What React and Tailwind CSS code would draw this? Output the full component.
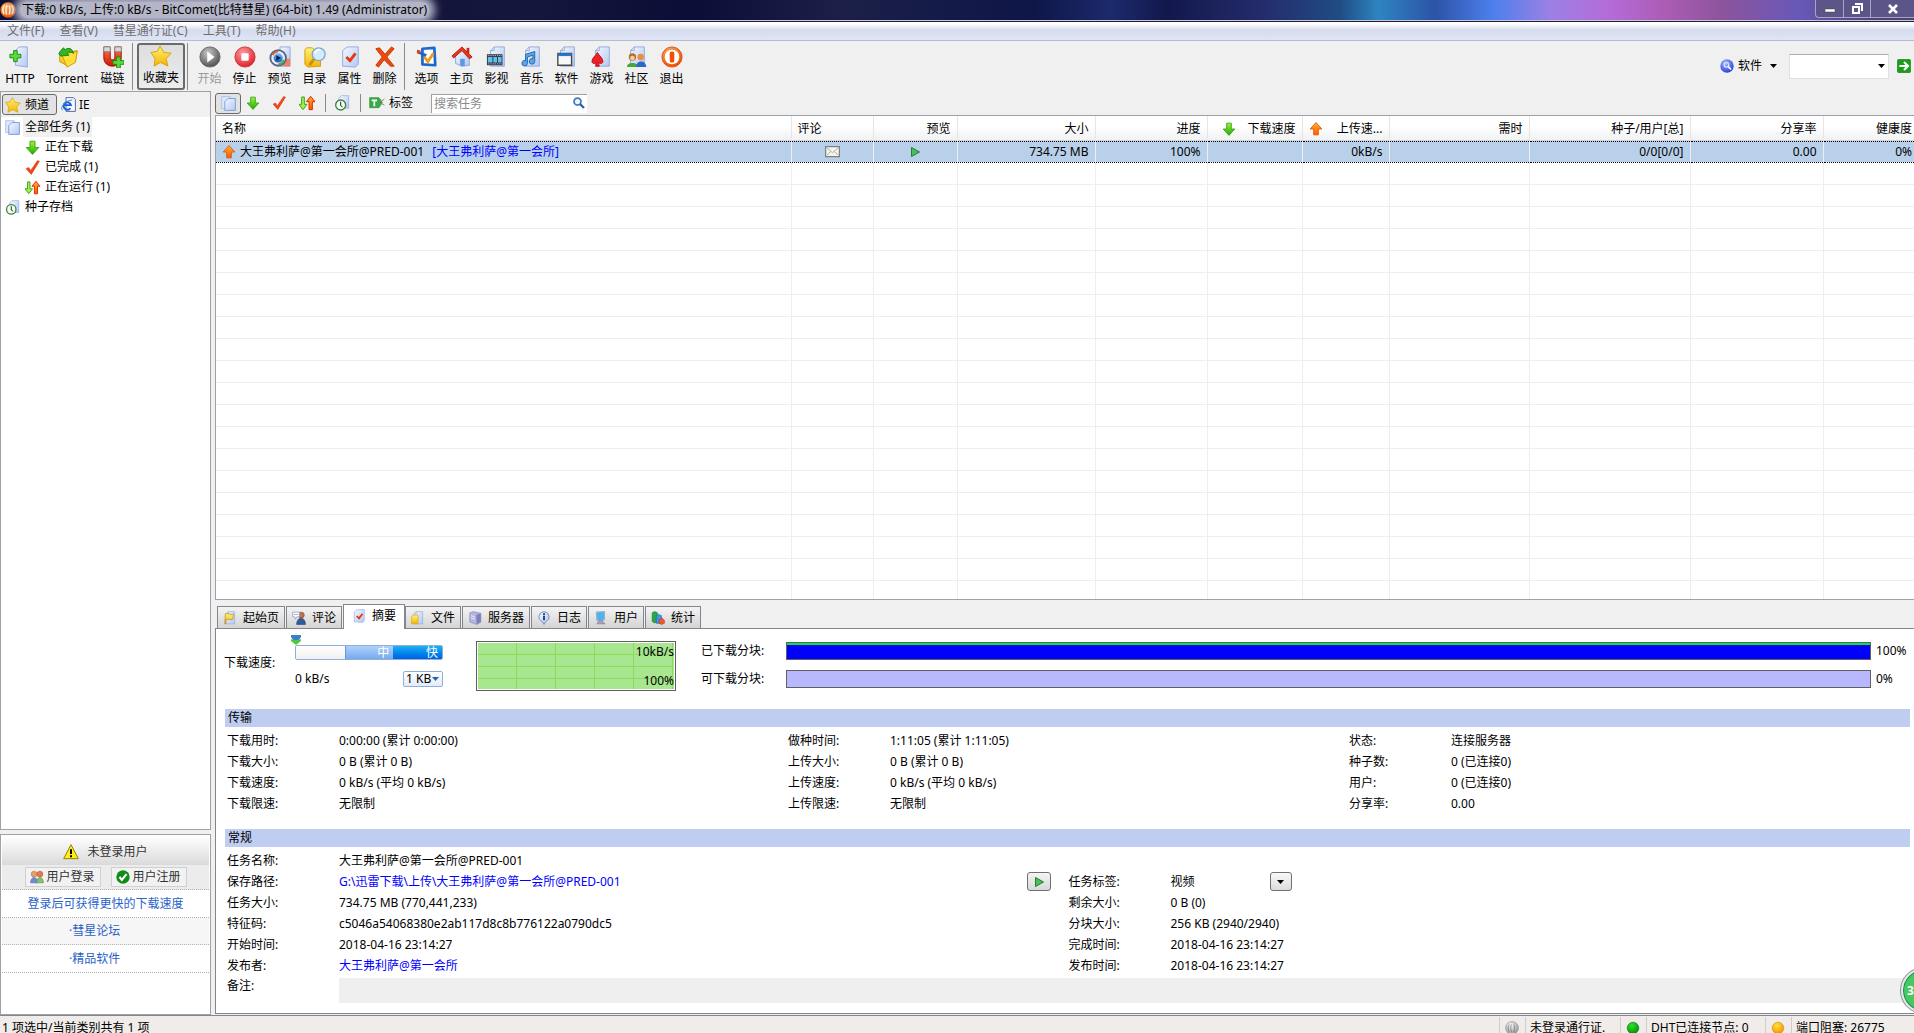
import React, { useState } from 'react';

/* shared gradients for all the small icons */
function IconDefs() {
  return (
    <svg width="0" height="0" className="absolute" aria-hidden="true">
      <defs>
        <linearGradient id="page" x1="0" y1="0" x2="1" y2="1">
          <stop offset="0" stopColor="#f4f8ff" />
          <stop offset="1" stopColor="#b4c8f4" />
        </linearGradient>
        <linearGradient id="gold" x1="0" y1="0" x2="0" y2="1">
          <stop offset="0" stopColor="#fff27a" />
          <stop offset="1" stopColor="#f4b400" />
        </linearGradient>
        <linearGradient id="red" x1="0" y1="0" x2="0" y2="1">
          <stop offset="0" stopColor="#ff7a52" />
          <stop offset="1" stopColor="#cc1800" />
        </linearGradient>
        <linearGradient id="orange" x1="0" y1="0" x2="0" y2="1">
          <stop offset="0" stopColor="#ffb030" />
          <stop offset="1" stopColor="#ff5a00" />
        </linearGradient>
        <linearGradient id="green" x1="0" y1="0" x2="0" y2="1">
          <stop offset="0" stopColor="#a8f030" />
          <stop offset="1" stopColor="#1fa80c" />
        </linearGradient>
        <linearGradient id="blue" x1="0" y1="0" x2="0" y2="1">
          <stop offset="0" stopColor="#6fc0f4" />
          <stop offset="1" stopColor="#1c58b8" />
        </linearGradient>
        <radialGradient id="grayBall" cx="0.4" cy="0.3" r="0.75">
          <stop offset="0" stopColor="#c8c8c8" />
          <stop offset="1" stopColor="#4a4a4a" />
        </radialGradient>
        <radialGradient id="redBall" cx="0.4" cy="0.3" r="0.75">
          <stop offset="0" stopColor="#ff9c9c" />
          <stop offset="1" stopColor="#dc1c28" />
        </radialGradient>
        <radialGradient id="orangeBall" cx="0.4" cy="0.3" r="0.75">
          <stop offset="0" stopColor="#ffb060" />
          <stop offset="1" stopColor="#e84800" />
        </radialGradient>
        <radialGradient id="blueBall" cx="0.4" cy="0.3" r="0.75">
          <stop offset="0" stopColor="#a8bcff" />
          <stop offset="1" stopColor="#1c38d8" />
        </radialGradient>
        <radialGradient id="greenBall" cx="0.4" cy="0.3" r="0.75">
          <stop offset="0" stopColor="#30e030" />
          <stop offset="1" stopColor="#008c00" />
        </radialGradient>
        <radialGradient id="yellowBall" cx="0.4" cy="0.3" r="0.75">
          <stop offset="0" stopColor="#ffe040" />
          <stop offset="1" stopColor="#f49000" />
        </radialGradient>
        <radialGradient id="silverBall" cx="0.4" cy="0.3" r="0.75">
          <stop offset="0" stopColor="#ffffff" />
          <stop offset="1" stopColor="#8c8c8c" />
        </radialGradient>
      </defs>
    </svg>
  );
}

const Page = () => (
  <path d="M9 1h11v21H5V5z M9 1v4H5" fill="url(#page)" stroke="#8ca8dc" strokeWidth="1" />
);

const Plus = ({ x, y }) => (
  <path
    transform={`translate(${x} ${y})`}
    d="M4 0h4v4h4v4H8v4H4V8H0V4h4z"
    fill="#5cd840"
    stroke="#189010"
  />
);

const icons = {
  http: <><path d="M11 1h9v22l-13-2V5z" fill="url(#page)" stroke="#8ca8dc" /><Plus x={1} y={5} /></>,
  torrent: (
    <>
      <path d="M3 7l2-3h6l2 3 9-2-2 12-8 5L3 17z" fill="url(#gold)" stroke="#c89000" />
      <path d="M5 9l17-3-2 12-9 5z" fill="#ffdf3a" stroke="#d09c00" />
      <path d="M2 8l5-6 2 2c4-3 8-1 9 4-3-2-5-2-7 0l2 2-9 1z" fill="#30b828" stroke="#0c8010" />
    </>
  ),
  magnet: (
    <>
      <path d="M2 1h7v11c0 4 5 4 5 0V1h7v12c0 12-19 12-19 0z" fill="url(#red)" stroke="#981400" />
      <path d="M2 1h7v5H2zM14 1h7v5h-7z" fill="#d8d8d8" stroke="#909090" />
      <Plus x={12} y={12} />
    </>
  ),
  star: (
    <path
      d="M11 1l4 7 8 1-5.500 6 2 8-8-4-7 4 1-8L1 8l7-1z"
      fill="url(#gold)"
      stroke="#d8a000"
      strokeLinejoin="round"
    />
  ),
  start: <><circle cx="12" cy="12" r="11" fill="url(#grayBall)" stroke="#666" /><path d="M9 6l8 6-8 6z" fill="#fff" /></>,
  stop: <><circle cx="12" cy="12" r="11" fill="url(#redBall)" stroke="#d03038" /><rect x="8" y="8" width="8" height="8" rx="1" fill="#fff" /></>,
  preview: (
    <>
      <path d="M12 1h11v21H12z" fill="url(#page)" stroke="#8ca8dc" />
      <path d="M17 14h6v8h-8z" fill="#f08060" />
      <circle cx="10" cy="13" r="8.500" fill="#e8eefc" stroke="#5a6480" strokeWidth="2" />
      <path d="M4 10a7 7 0 0 1 6-4" stroke="#e06040" strokeWidth="2" fill="none" />
      <path d="M16 15a7 7 0 0 1-6 5" stroke="#40b060" strokeWidth="2" fill="none" />
      <circle cx="10" cy="13" r="5" fill="url(#blue)" />
      <path d="M8 10l5 3-5 3z" fill="#061c50" />
    </>
  ),
  folder: (
    <>
      <path d="M1 4l2-2h6l2 2h7v18l-14 1-3-3z" fill="url(#gold)" stroke="#d09c00" />
      <path d="M11 14l-5 7" stroke="#c88c20" strokeWidth="3" />
      <circle cx="16" cy="9" r="7" fill="#d4ecfc" stroke="#80a8d0" strokeWidth="1.500" />
      <path d="M12 8c1-3 3-4 5-4" stroke="#fff" strokeWidth="2" fill="none" />
    </>
  ),
  props: <><path d="M9 1h12v19l-3 3-14-1V5z" fill="url(#page)" stroke="#8ca8dc" /><path d="M8 12l4 4 6-8" fill="none" stroke="#e43808" strokeWidth="3" /></>,
  remove: (
    <path d="M2 3l4-1 6 7 7-8 3 2-8 9 8 10h-4l-7-7-6 8-3-2 7-9z" fill="#ec4a0c" stroke="#c83400" />
  ),
  options: (
    <>
      <path d="M7 3l13-1 1 19-14-1z" fill="#fff" stroke="#1c68d0" strokeWidth="3" strokeLinejoin="round" />
      <path d="M9 12l4 5 6-9" fill="none" stroke="#f49810" strokeWidth="3" />
      <path d="M1 5l11 4-2 3-8-4z" fill="#2464c0" />
      <path d="M1 4l4 1-1 4-3-1z" fill="#d84020" />
    </>
  ),
  home: (
    <>
      <path d="M5 11l7-7 8 7v10l-8 1-7-3z" fill="url(#page)" stroke="#88a8d8" />
      <path d="M10 14h5v8h-5z" fill="#5c98e4" />
      <path d="M17 2h3v6h-3z" fill="#c03018" />
      <path d="M1 11L12 1l11 11-3 2-8-9-9 8z" fill="#ec3418" stroke="#b01c08" />
    </>
  ),
  film: (
    <>
      <Page />
      <path d="M1 9h17v12H1z" fill="#30343c" />
      <path d="M2 12h5v6H2zM8 12h4v6H8zM13 12h4v6h-4z" fill="#60c0f0" />
      <path d="M2 10.500h16M2 19.500h16" stroke="#e8e8e8" strokeWidth="1" strokeDasharray="1 1" />
    </>
  ),
  music: (
    <>
      <Page />
      <path d="M5 9l10-3v11a3 3 0 1 1-2-3v-4l-6 2v7a3 3 0 1 1-2-3z" fill="#58a8e8" stroke="#2060a8" />
    </>
  ),
  app: (
    <>
      <Page />
      <path d="M2 8h15v13H2z" fill="#f8f8f8" stroke="#484848" strokeWidth="1.500" />
      <path d="M2 8h15v3H2z" fill="#2878d0" />
    </>
  ),
  game: (
    <>
      <Page />
      <path d="M7 7c2 4 6 6 6 10 0 2-3 3-5 1l1 4H5l1-4c-2 2-5 1-5-1 0-4 4-6 6-10z" fill="#f02028" stroke="#c00c14" />
    </>
  ),
  people: (
    <>
      <Page />
      <circle cx="7" cy="12" r="4" fill="#b87028" />
      <circle cx="7" cy="13" r="2.500" fill="#f8d0a0" />
      <path d="M1 23c0-6 12-6 12 0z" fill="#44a838" />
      <circle cx="16" cy="12" r="3.500" fill="#e89040" />
      <path d="M11 23c0-8 11-8 11 0z" fill="#2c68c8" />
    </>
  ),
  exit: (
    <>
      <circle cx="12" cy="12" r="11" fill="url(#orangeBall)" stroke="#e05010" />
      <circle cx="12" cy="12" r="8" fill="#fff" />
      <rect x="9.500" y="6" width="5" height="12" rx="2" fill="#f05000" />
    </>
  ),
  pages: (
    <>
      <path d="M1 1h14v19H1z" fill="#dce8fc" stroke="#94b0e0" />
      <path d="M11 4h12v19H6V9z" fill="url(#page)" stroke="#7c9cd8" strokeWidth="1.500" />
    </>
  ),
  down: <path d="M8 2h8v10h6L12 23 2 12h6z" fill="url(#green)" stroke="#30a818" strokeWidth="1.500" />,
  up: <path d="M8 22h8V12h6L12 1 2 12h6z" fill="url(#orange)" stroke="#e05800" strokeWidth="1.500" />,
  check: <path d="M2 14l4-2 3 5L20 1l3 1L10 23z" fill="#f04818" stroke="#d83000" />,
  updown: (
    <>
      <path d="M4 3h4v11h4l-6 8-6-8h4z" fill="#a8ec50" stroke="#38a818" strokeWidth="1.500" />
      <path d="M15 22h5V10h4L17.500 2 11 10h4z" fill="url(#orange)" stroke="#e02800" strokeWidth="1.500" />
    </>
  ),
  clock: (
    <>
      <path d="M11 1h11v19H7V5z" fill="url(#page)" stroke="#8ca8dc" />
      <circle cx="10" cy="15" r="7.500" fill="#f4fff4" stroke="#3c8040" strokeWidth="2" />
      <path d="M10 10v6l3 2" fill="none" stroke="#202020" strokeWidth="1.500" />
    </>
  ),
  tag: (
    <>
      <path d="M1 4h14l5 7-5 8H1z" fill="#3ca848" stroke="#249034" />
      <path d="M4 8h8M8 8v9" stroke="#fff" strokeWidth="2.500" />
      <path d="M18 11c2-4 3-3 5-5M18 12c2 3 3 1 5 3" stroke="#787878" fill="none" strokeWidth="1.500" />
    </>
  ),
  ie: (
    <>
      <path d="M8 1h12l3 3v19H8z" fill="#f8faff" stroke="#4c64a0" strokeWidth="1.500" />
      <path d="M15 18a6 6 0 1 1 1-5H4" fill="none" stroke="#1c60d8" strokeWidth="3" />
      <path d="M2 21C-2 16 8 5 18 5" stroke="#2880e8" fill="none" strokeWidth="1.500" />
    </>
  ),
  search: (
    <>
      <circle cx="9" cy="9" r="7" fill="#f0f6ff" stroke="#3c78c0" strokeWidth="3.500" />
      <path d="M14 14l8 8" stroke="#2c5ca8" strokeWidth="4.500" />
    </>
  ),
  searchBall: (
    <>
      <circle cx="12" cy="12" r="11.500" fill="url(#blueBall)" />
      <circle cx="11" cy="10" r="4" fill="none" stroke="#dce8ff" strokeWidth="2" />
      <path d="M14 13l5 5" stroke="#fff" strokeWidth="3" />
    </>
  ),
  go: (
    <>
      <rect x="0.500" y="0.500" width="23" height="23" rx="3" fill="#1c9c1c" stroke="#108010" />
      <path d="M4 12h13M12 5l7 7-7 7" stroke="#fff" strokeWidth="3.500" fill="none" />
    </>
  ),
  play: <path d="M5 3l16 9-16 9z" fill="#4cbc5c" stroke="#1c8030" strokeWidth="2" />,
  mail: (
    <>
      <path d="M1 4h22v16H1z" fill="#f4f4f0" stroke="#808080" strokeWidth="2" />
      <path d="M3 6l9 8 9-8M3 18l6-6M21 18l-6-6" stroke="#a8a8a8" fill="none" strokeWidth="1.500" />
    </>
  ),
  warn: (
    <>
      <path d="M12 1l11 21H1z" fill="#ffee10" stroke="#908408" strokeWidth="1.500" strokeLinejoin="round" />
      <path d="M12 8v7M12 17v3" stroke="#000" strokeWidth="3" />
    </>
  ),
  users: (
    <>
      <circle cx="7" cy="7" r="5" fill="#e8a060" stroke="#b87030" />
      <path d="M1 22c0-12 12-12 12 0z" fill="#7088d8" stroke="#5068b0" />
      <circle cx="17" cy="7" r="5" fill="#e87850" stroke="#b05030" />
      <path d="M11 22c0-12 12-12 12 0z" fill="#80c070" stroke="#509040" />
    </>
  ),
  ok: <><circle cx="12" cy="12" r="11.500" fill="#108c18" /><path d="M6 12l4 5 8-10" stroke="#fff" strokeWidth="3.500" fill="none" /></>,
  flag: <><Page /><path d="M4 5c5-3 8 3 14 0l-1 9c-5 3-7-2-12 1v7H3z" fill="url(#gold)" stroke="#a88010" /></>,
  comment: (
    <>
      <circle cx="16" cy="7" r="5" fill="#c87048" stroke="#803820" />
      <path d="M8 23c0-14 15-14 15 0z" fill="#305c98" stroke="#203c70" />
      <path d="M1 2h12v8H8l-2 4-1-4H1z" fill="#fff" stroke="#7088b0" />
      <path d="M3 6h8" stroke="#7088b0" strokeWidth="1.500" strokeDasharray="2 1" />
    </>
  ),
  file: <><Page /><path d="M1 9l3-2h8v15H1z" fill="url(#gold)" stroke="#d8a000" /></>,
  server: (
    <>
      <path d="M3 3l6-2 13 3v15l-7 4L3 19z" fill="#b4b4e0" stroke="#8484b4" />
      <path d="M14 7l8-3v15l-7 4z" fill="#8080b8" />
      <path d="M5 8l7 2M5 12l7 2" stroke="#f0f0ff" strokeWidth="1.500" />
    </>
  ),
  log: (
    <>
      <path d="M12 1a10 9 0 0 1 3 17l-3 5-3-5A10 9 0 0 1 12 1z" fill="url(#page)" stroke="#6c84b0" strokeWidth="1.500" />
      <path d="M12 4v3M12 8v8" stroke="#103070" strokeWidth="3" />
    </>
  ),
  pc: (
    <>
      <path d="M4 2l14-1v14l-13 1z" fill="#48b4f0" stroke="#a0b0c8" strokeWidth="2" />
      <path d="M9 16h6v3l4 3H5z" fill="#9ca4c4" stroke="#707898" />
    </>
  ),
  stat: (
    <>
      <path d="M2 3l4-2 5 2v17H5l-3-2z" fill="#28a848" stroke="#108030" />
      <path d="M9 8l4-2 5 2v13H9z" fill="#3898e0" stroke="#1868b0" />
      <path d="M14 15l5-3 4 4v5l-5 2-4-2z" fill="#f05830" stroke="#c03010" />
    </>
  ),
  comet: (
    <>
      <circle cx="12" cy="12" r="11.500" fill="url(#orangeBall)" />
      <path d="M6 18C3 12 5 7 7 5M10 19C8 12 9 8 11 5M14 19c2-7 1-11 0-14M18 18c3-6 1-11-1-13" stroke="#ffe8c8" strokeWidth="2.500" fill="none" />
    </>
  ),
  passport: (
    <>
      <circle cx="12" cy="12" r="11" fill="url(#silverBall)" stroke="#8c8c8c" />
      <path d="M7 18C4 12 6 7 8 6M11 19c-2-7-1-11 0-13M15 19c2-7 1-11 0-13" stroke="#7c7c7c" strokeWidth="1.500" fill="none" />
    </>
  ),
  greenLed: <circle cx="12" cy="12" r="10" fill="url(#greenBall)" stroke="#087808" />,
  yellowLed: <circle cx="12" cy="12" r="10" fill="url(#yellowBall)" stroke="#d88800" />,
};

function Icon({ name, className = 'w-4 h-4' }) {
  return (
    <svg viewBox="0 0 24 24" className={`${className} shrink-0`} aria-hidden="true">
      {icons[name]}
    </svg>
  );
}

const Caret = ({ className = 'text-black' }) => (
  <svg viewBox="0 0 7 4" className={`w-[7px] h-1 shrink-0 ${className}`} aria-hidden="true">
    <path d="M0 0h7L3.500 4z" fill="currentColor" />
  </svg>
);

const menus = ['文件(F)', '查看(V)', '彗星通行证(C)', '工具(T)', '帮助(H)'];

const taskTools = [
  ['start', '开始'],
  ['stop', '停止'],
  ['preview', '预览'],
  ['folder', '目录'],
  ['props', '属性'],
  ['remove', '删除'],
];

const siteTools = [
  ['options', '选项'],
  ['home', '主页'],
  ['film', '影视'],
  ['music', '音乐'],
  ['app', '软件'],
  ['game', '游戏'],
  ['people', '社区'],
  ['exit', '退出'],
];

const columns = [
  { title: '名称', width: '', pad: 'pl-1.5' },
  { title: '评论', width: 'w-[82px]', pad: 'pl-1.5' },
  { title: '预览', width: 'w-[84px]', pad: 'justify-end pr-1.5' },
  { title: '大小', width: 'w-[138px]', pad: 'justify-end pr-1.5' },
  { title: '进度', width: 'w-[112px]', pad: 'justify-end pr-1.5' },
  { title: '下载速度', width: 'w-[95px]', pad: 'justify-between pl-3.5 pr-1.5', icon: 'down' },
  { title: '上传速...', width: 'w-[87px]', pad: 'justify-between pl-1.5 pr-1.5', icon: 'up' },
  { title: '需时', width: 'w-[140px]', pad: 'justify-end pr-1.5' },
  { title: '种子/用户[总]', width: 'w-[161px]', pad: 'justify-end pr-1.5' },
  { title: '分享率', width: 'w-[133px]', pad: 'justify-end pr-1.5' },
  { title: '健康度', width: 'w-[91px]', pad: 'justify-end pr-0.5' },
];

const tabs = [
  ['flag', '起始页'],
  ['comment', '评论'],
  ['props', '摘要'],
  ['file', '文件'],
  ['server', '服务器'],
  ['log', '日志'],
  ['pc', '用户'],
  ['stat', '统计'],
];

const transfer = [
  [['下载用时:', '0:00:00 (累计 0:00:00)'], ['做种时间:', '1:11:05 (累计 1:11:05)'], ['状态:', '连接服务器']],
  [['下载大小:', '0 B (累计 0 B)'], ['上传大小:', '0 B (累计 0 B)'], ['种子数:', '0 (已连接0)']],
  [['下载速度:', '0 kB/s (平均 0 kB/s)'], ['上传速度:', '0 kB/s (平均 0 kB/s)'], ['用户:', '0 (已连接0)']],
  [['下载限速:', '无限制'], ['上传限速:', '无限制'], ['分享率:', '0.00']],
];

const emptyRows = Array.from({ length: 30 }, (_, i) => i);

function ToolButton({ icon, label, width = 'w-[35px]', disabled }) {
  return (
    <button type="button" disabled={disabled} className={`${width} flex flex-col items-center pt-0.5 ${disabled ? 'text-[#9a9a9a]' : ''}`}>
      <Icon name={icon} className="w-[22px] h-[22px]" />
      <span className="mt-0.5 leading-[18px] whitespace-nowrap">{label}</span>
    </button>
  );
}

const ToolSeparator = () => <div className="w-px self-stretch ml-0.5 mr-1 bg-[#8a8a8a]" />;

function TitleBar() {
  return (
    <header className="flex items-center h-[21px] shrink-0 border-b border-[#c9c6e0] bg-[linear-gradient(90deg,#0c1034_0%,#14163c_28%,#0a0e36_36%,#1c2048_44%,#0e1648_54%,#1c2a6c_58%,#12184c_61%,#242c6c_66%,#204c84_70%,#2e84c0_72%,#2c54a8_75%,#4c80ec_78%,#9c80e4_81%,#b46cd8_84%,#ac5cb4_87%,#8c549c_90%,#6858b8_94%,#4c4470_98%)]">
      <Icon name="comet" className="w-4 h-4" />
      <h1 className="ml-1 px-0.5 leading-4 text-[12px] text-black rounded-full bg-[#b4b6c8] shadow-[0_0_8px_6px_#b4b6c8] whitespace-nowrap">
        下载:0 kB/s, 上传:0 kB/s - BitComet(比特彗星) (64-bit) 1.49 (Administrator)
      </h1>
      <div className="ml-auto self-start flex h-[18px] rounded-bl border-l border-b border-[#a8a4cc] bg-[#5c5688] text-white">
        <button type="button" aria-label="最小化" className="w-7 flex justify-center items-center border-r border-[#a8a4cc]">
          <svg viewBox="0 0 12 10" className="w-3 h-2.5"><path d="M1 5h10v3H1z" fill="#fff" stroke="#444" strokeWidth="0.500" /></svg>
        </button>
        <button type="button" aria-label="还原" className="w-[27px] flex justify-center items-center border-r border-[#a8a4cc]">
          <svg viewBox="0 0 12 12" className="w-3 h-3"><path d="M4 1h7v7M2 4h6v6H2z" fill="none" stroke="#fff" strokeWidth="2" /></svg>
        </button>
        <button type="button" aria-label="关闭" className="w-[43px] flex justify-center items-center">
          <svg viewBox="0 0 10 10" className="w-2.5 h-2.5"><path d="M1 1l8 8M9 1L1 9" stroke="#fff" strokeWidth="2.500" /></svg>
        </button>
      </div>
    </header>
  );
}

function Toolbar() {
  return (
    <div className="flex items-center h-[50px] shrink-0">
      <div className="flex items-center h-[47px]">
        <ToolButton icon="http" label="HTTP" width="w-10" />
        <ToolButton icon="torrent" label="Torrent" width="w-[55px]" />
        <ToolButton icon="magnet" label="磁链" />
        <ToolSeparator />
        <button type="button" aria-pressed="true" className="w-12 h-[47px] flex flex-col items-center rounded-[3px] border-2 border-[#6a6a6a] bg-linear-to-b from-[#dedede] to-[#ececec]">
          <Icon name="star" className="w-[22px] h-[22px]" />
          <span className="mt-0.5 leading-[18px] whitespace-nowrap">收藏夹</span>
        </button>
        <ToolSeparator />
        {taskTools.map(([icon, label]) => (
          <ToolButton key={label} icon={icon} label={label} disabled={icon === 'start'} />
        ))}
        <ToolSeparator />
        {siteTools.map(([icon, label]) => (
          <ToolButton key={label} icon={icon} label={label} />
        ))}
      </div>
      <div className="ml-auto flex items-center pr-[3px]">
        <Icon name="searchBall" className="w-3.5 h-3.5" />
        <button type="button" className="flex items-center gap-2 ml-1 mr-3">
          软件 <Caret />
        </button>
        <div className="relative flex items-center">
          <select aria-label="搜索内容" className="appearance-none w-[100px] h-[25px] bg-white border border-[#dde0e8] border-t-[#aaaab0]">
            <option></option>
          </select>
          <span className="absolute right-1 pointer-events-none"><Caret /></span>
        </div>
        <button type="button" aria-label="搜索" className="ml-2">
          <Icon name="go" className="w-3.5 h-3.5" />
        </button>
      </div>
    </div>
  );
}

function TreeItem({ icon, label, nested, selected }) {
  return (
    <li className={`flex items-center h-5 ${nested ? 'pl-6' : 'pl-1'}`}>
      <Icon name={icon} className="w-[15px] h-[15px]" />
      <span className={`ml-[3px] px-0.5 leading-5 ${selected ? 'bg-[#f0f0f0]' : ''}`}>{label}</span>
    </li>
  );
}

function Sidebar() {
  return (
    <aside className="w-[211px] shrink-0 flex flex-col gap-1">
      <div className="flex-1 min-h-0 border border-[#a0a0a8] bg-white">
        <div className="flex items-center h-[25px] bg-[#f0f0f0] pl-px">
          <button type="button" className="flex items-center h-[21px] w-[55px] pl-0.5 gap-1 rounded-[3px] border border-[#6a6a6a] bg-[#e2e2e2]">
            <Icon name="star" />
            <span>频道</span>
          </button>
          <button type="button" className="flex items-center gap-[3px] ml-1">
            <Icon name="ie" className="w-[15px] h-[15px]" /> IE
          </button>
        </div>
        <ul>
          <TreeItem icon="pages" label="全部任务 (1)" selected />
          <TreeItem icon="down" label="正在下载" nested />
          <TreeItem icon="check" label="已完成 (1)" nested />
          <TreeItem icon="updown" label="正在运行 (1)" nested />
          <TreeItem icon="clock" label="种子存档" />
        </ul>
      </div>
      <div className="border border-[#a0a0a8] bg-white p-px pb-[41px] text-[#2a62c8]">
        <div className="flex items-center justify-center gap-2 h-[29px] pt-0.5 bg-linear-to-b from-white to-[#dadada] text-[#333]">
          <Icon name="warn" /> 未登录用户
        </div>
        <div className="flex items-center justify-center gap-2.5 h-[25px] bg-[#ececec] text-[#333] border-b border-dotted border-[#b0b0b0]">
          <button type="button" className="flex items-center justify-center gap-0.5 w-[76px] h-5 border border-[#d0d0d0] bg-[#f2f2f2]">
            <Icon name="users" className="w-3.5 h-3.5" /> 用户登录
          </button>
          <button type="button" className="flex items-center justify-center gap-0.5 w-[76px] h-5 border border-[#d0d0d0] bg-[#f2f2f2]">
            <Icon name="ok" className="w-3.5 h-3.5" /> 用户注册
          </button>
        </div>
        <a href="#login" className="flex items-center justify-center h-7 border-b border-dotted border-[#b0b0b0]">登录后可获得更快的下载速度</a>
        <a href="#forum" className="flex items-center h-[27px] pl-[67px] bg-[#f6f6f6] border-b border-dotted border-[#b0b0b0]">·彗星论坛</a>
        <a href="#soft" className="flex items-center h-7 pl-[67px] border-b border-dotted border-[#b0b0b0]">·精品软件</a>
      </div>
    </aside>
  );
}

function FilterBar() {
  return (
    <div className="flex items-center h-6 shrink-0">
      <button type="button" aria-label="全部任务" className="flex items-center justify-center w-[26px] h-[21px] rounded-[3px] border border-[#6a6a6a] bg-[#e2e2e2]">
        <Icon name="pages" className="w-[15px] h-[15px]" />
      </button>
      <button type="button" aria-label="正在下载" className="w-6 flex justify-center"><Icon name="down" className="w-3.5 h-3.5" /></button>
      <button type="button" aria-label="已完成" className="w-7 flex justify-center"><Icon name="check" className="w-3.5 h-3.5" /></button>
      <button type="button" aria-label="正在运行" className="w-7 flex justify-center"><Icon name="updown" /></button>
      <div className="w-px h-[18px] mx-1 bg-[#8a8a8a]" />
      <button type="button" aria-label="种子存档" className="w-6 flex justify-center"><Icon name="clock" /></button>
      <div className="w-px h-[18px] ml-1.5 mr-2 bg-[#8a8a8a]" />
      <button type="button" className="flex items-center gap-1"><Icon name="tag" /> 标签</button>
      <div className="relative flex items-center ml-[18px]">
        <input type="text" aria-label="搜索任务" placeholder="搜索任务" className="w-[156px] h-[19px] pl-0.5 pr-5 bg-white border-t border-l border-[#a0a0a0] placeholder:text-[#8a8a8a] outline-none" />
        <button type="button" aria-label="搜索" className="absolute right-0.5"><Icon name="search" className="w-3 h-3" /></button>
      </div>
    </div>
  );
}

function TaskTable() {
  return (
    <div className="flex-1 min-h-0 overflow-hidden bg-white border border-r-0 border-[#a0a0a8]">
      <table className="w-full table-fixed border-collapse">
        <thead>
          <tr className="h-[25px] bg-linear-to-b from-white from-40% to-[#eff0f2]">
            {columns.map((col) => (
              <th key={col.title} className={`${col.width} p-0 pt-0.5 font-normal shadow-[inset_0_-1px_#d5d5d5] border-r border-r-[#e6e6e6] last:border-r-0`}>
                <div className={`flex items-center ${col.pad}`}>
                  {col.icon && <Icon name={col.icon} className="w-3.5 h-3.5" />}
                  <span className="whitespace-nowrap">{col.title}</span>
                </div>
              </th>
            ))}
          </tr>
        </thead>
        <tbody>
          <tr className="h-[21px] bg-[#b8d0ea] border-y border-dotted border-black text-right [&>td]:px-1.5 [&>td]:border-r [&>td]:border-solid [&>td]:border-r-[#eeeeee] [&>td:last-child]:border-r-0 [&>td:last-child]:pr-0.5">
            <td>
              <div className="flex items-center">
                <Icon name="up" className="w-3.5 h-3.5" />
                <span className="ml-1">大王弗利萨@第一会所@PRED-001</span>
                <span className="ml-2 text-[#0000ff]">[大王弗利萨@第一会所]</span>
              </div>
            </td>
            <td><Icon name="mail" className="w-[15px] h-[15px] mx-auto" /></td>
            <td><Icon name="play" className="w-3 h-3 mx-auto" /></td>
            <td>734.75 MB</td>
            <td>100%</td>
            <td></td>
            <td>0kB/s</td>
            <td></td>
            <td>0/0[0/0]</td>
            <td>0.00</td>
            <td>0%</td>
          </tr>
          {emptyRows.map((row) => (
            <tr key={row} className="h-[22px]">
              {columns.map((col) => (
                <td key={col.title} className="p-0 border-b border-r border-[#eeeeee] last:border-r-0"></td>
              ))}
            </tr>
          ))}
        </tbody>
      </table>
    </div>
  );
}

function SpeedRow() {
  const [limit, setLimit] = useState(0);
  return (
    <div className="flex items-center h-20 pl-2 pr-1">
      <label htmlFor="speed" className="w-[71px] pb-3">下载速度:</label>
      <div className="w-[148px] self-start pt-1.5">
        <div className="relative">
          <svg viewBox="0 0 10 10" className="w-2.5 h-2.5 -ml-1" aria-hidden="true">
            <path d="M0 0h10v2L8 5H2L0 2z" fill="#3880c8" />
            <path d="M0 4l2 1h6l2-1v2L5 10 0 6z" fill="#50c838" />
          </svg>
          <div className="grid grid-cols-3 h-[15px] rounded-xs border border-[#8cb0d8] overflow-hidden text-white text-right leading-[14px]">
            <span className="bg-linear-to-b from-white to-[#f0f0f0]"></span>
            <span className="pr-1 border-l border-[#6898dc] bg-linear-to-b from-[#b0d0fa] to-[#70a8ec]">中</span>
            <span className="pr-1 bg-linear-to-b from-[#20b0f4] to-[#0858e0]">快</span>
          </div>
          <input id="speed" type="range" min="0" max="100" value={limit} onChange={(e) => setLimit(e.target.value)} className="absolute inset-0 w-full opacity-0" />
        </div>
        <div className="flex items-center justify-between mt-[11px]">
          <span>0 kB/s</span>
          <span className="relative flex items-center">
            <select aria-label="单位" className="appearance-none w-10 h-4 pl-0.5 leading-[14px] border border-[#8cb0d8] rounded-xs bg-linear-to-b from-white to-[#e4ecf8]">
              <option>1 KB</option>
            </select>
            <span className="absolute right-1 pointer-events-none"><Caret className="text-[#2860b0]" /></span>
          </span>
        </div>
      </div>
      <div className="w-[200px] h-[50px] ml-[33px] mb-1.5 border border-[#606060] p-px">
        <div className="w-full h-full flex flex-col justify-between items-end bg-[#a8e690] bg-[linear-gradient(to_right,#8cdc5c_1px,transparent_1px),linear-gradient(to_bottom,#8cdc5c_1px,transparent_1px)] bg-[size:39px_12px] bg-[position:38px_11px] leading-[17px]">
          <span>10kB/s</span>
          <span>100%</span>
        </div>
      </div>
      <div className="flex-1 ml-[25px] mb-2 flex flex-col gap-2.5">
        <div className="flex items-center">
          <span className="w-[85px]">已下载分块:</span>
          <div className="flex-1 h-[18px] border border-[#606060] bg-[#0000ff]"><div className="h-0.5 bg-[#00e838]"></div></div>
          <span className="w-[39px] pl-[5px]">100%</span>
        </div>
        <div className="flex items-center">
          <span className="w-[85px]">可下载分块:</span>
          <div className="flex-1 h-[18px] border border-[#606060] bg-[#b8b8ff]"></div>
          <span className="w-[39px] pl-[5px]">0%</span>
        </div>
      </div>
    </div>
  );
}

const SectionTitle = ({ children }) => (
  <h2 className="ml-[9px] mr-1 pl-[3px] h-[18px] leading-[18px] bg-[#bfcdf0]">{children}</h2>
);

function Field({ label, first, children }) {
  return (
    <div className="flex items-center h-[21px]">
      <dt className={first ? 'w-28' : 'w-[102px]'}>{label}</dt>
      <dd className="flex-1 flex items-center whitespace-nowrap">{children}</dd>
    </div>
  );
}

function Summary() {
  return (
    <section className="shrink-0 bg-white border border-r-0 border-[#84868e] pb-[10px]">
      <SpeedRow />
      <SectionTitle>传输</SectionTitle>
      <dl className="grid grid-cols-3 ml-[11px] mr-1 pt-[3px] mb-[15px]">
        {transfer.map((row) =>
          row.map(([label, value], i) => (
            <Field key={label} label={label} first={i === 0}>{value}</Field>
          ))
        )}
      </dl>
      <SectionTitle>常规</SectionTitle>
      <dl className="grid grid-cols-2 ml-[11px] mr-1 pt-[3px]">
        <Field label="任务名称:" first>大王弗利萨@第一会所@PRED-001</Field>
        <div></div>
        <Field label="保存路径:" first>
          <a href="#folder" className="text-[#0000ff]">G:\迅雷下载\上传\大王弗利萨@第一会所@PRED-001</a>
          <button type="button" aria-label="打开" className="ml-auto mr-[18px] flex items-center justify-center w-6 h-[19px] rounded-[3px] border border-[#707070] bg-linear-to-b from-[#f4f4f4] to-[#d8d8d8]">
            <Icon name="play" className="w-3 h-3" />
          </button>
        </Field>
        <Field label="任务标签:">
          <span className="w-[99px]">视频</span>
          <button type="button" aria-label="选择标签" className="flex items-center justify-center w-[22px] h-[19px] rounded-[3px] border border-[#707070] bg-linear-to-b from-[#f8f8f8] to-[#dcdcdc]">
            <Caret />
          </button>
        </Field>
        <Field label="任务大小:" first>734.75 MB (770,441,233)</Field>
        <Field label="剩余大小:">0 B (0)</Field>
        <Field label="特征码:" first>c5046a54068380e2ab117d8c8b776122a0790dc5</Field>
        <Field label="分块大小:">256 KB (2940/2940)</Field>
        <Field label="开始时间:" first>2018-04-16 23:14:27</Field>
        <Field label="完成时间:">2018-04-16 23:14:27</Field>
        <Field label="发布者:" first><a href="#publisher" className="text-[#0000ff]">大王弗利萨@第一会所</a></Field>
        <Field label="发布时间:">2018-04-16 23:14:27</Field>
      </dl>
      <div className="flex ml-[11px] mr-1 pt-0.5">
        <label htmlFor="note" className="w-28 leading-4">备注:</label>
        <textarea id="note" readOnly className="flex-1 h-[25px] resize-none bg-[#efefef] outline-none"></textarea>
      </div>
    </section>
  );
}

function DetailTabs() {
  const [active, setActive] = useState('摘要');
  return (
    <nav className="flex items-end h-[25px] mt-1 -mb-px pl-0.5 shrink-0 relative">
      {tabs.map(([icon, label]) => (
        <button
          key={label}
          type="button"
          onClick={() => setActive(label)}
          className={
            label === active
              ? 'flex items-center gap-1.5 h-[25px] px-2 pb-0.5 border border-b-0 border-[#84868e] bg-white'
              : 'flex items-center gap-1.5 h-[23px] px-[5px] mr-px border border-[#84868e] bg-linear-to-b from-[#f4f4f4] to-[#d4d4d4]'
          }
        >
          <Icon name={icon} className="w-3.5 h-3.5" /> {label}
        </button>
      ))}
    </nav>
  );
}

function StatusBar() {
  return (
    <footer className="shrink-0 flex items-start h-[18px] pt-px border-t border-[#84868e] bg-[#f0ecea] overflow-hidden">
      <span className="pl-0.5 pt-0.5 leading-[18px] mr-auto">1 项选中/当前类别共有 1 项</span>
      <div className="flex pr-6 [&>*]:h-5 [&>*]:border-l [&>*]:border-[#d0cccc] [&>span]:pt-0.5 [&>span]:pl-1 [&>span]:leading-[18px]">
        <div className="w-[26px] pt-1 pl-[5px]"><Icon name="passport" className="w-3.5 h-3.5" /></div>
        <span className="w-[95px]">未登录通行证.</span>
        <div className="w-[26px] pt-1 pl-[5px]"><Icon name="greenLed" className="w-3.5 h-3.5" /></div>
        <span className="w-[119px]">DHT已连接节点: 0</span>
        <div className="w-[26px] pt-1 pl-[5px]"><Icon name="yellowLed" className="w-3.5 h-3.5" /></div>
        <span className="w-[99px]">端口阻塞: 26775</span>
      </div>
    </footer>
  );
}

export default function App() {
  return (
    <div className="relative h-screen flex flex-col overflow-hidden bg-[#f0f0f0] text-black text-[12px] leading-4 font-['Noto_Sans','Noto_Sans_CJK_SC',sans-serif]">
      <IconDefs />
      <TitleBar />
      <nav className="flex items-center gap-[15px] h-5 pl-[7px] shrink-0 border-t border-t-[#20203c] border-b border-b-[#b4bcd0] bg-linear-to-b from-white from-10% via-[#d6dcee] via-45% to-[#dfe5f6] text-[#6e6e6e]">
        {menus.map((menu) => (
          <button key={menu} type="button">{menu}</button>
        ))}
      </nav>
      <Toolbar />
      <main className="flex-1 min-h-0 flex gap-1">
        <Sidebar />
        <div className="flex-1 min-w-0 flex flex-col pb-px">
          <FilterBar />
          <TaskTable />
          <DetailTabs />
          <Summary />
        </div>
      </main>
      <StatusBar />
      <div className="absolute -right-8 bottom-5 flex items-center w-[45px] h-[45px] pl-1 rounded-full border-2 border-[#e8e8e8] bg-[#48c860] shadow-[0_0_0_1px_#909090,inset_0_0_0_1px_#0c8c50] text-white font-bold">
        3
      </div>
    </div>
  );
}
